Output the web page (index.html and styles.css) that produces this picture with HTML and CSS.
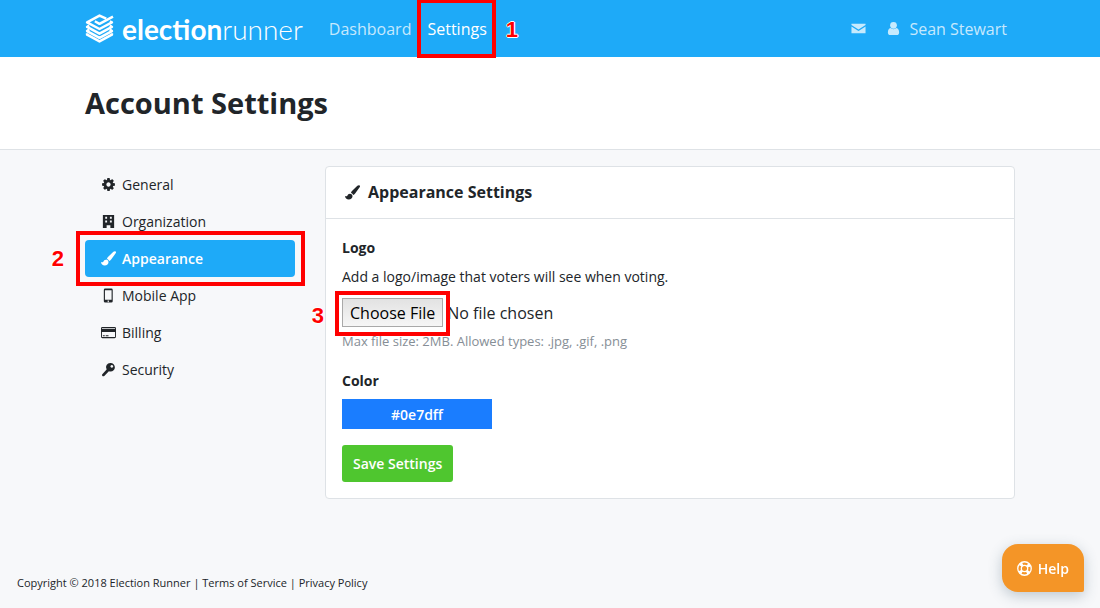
FILE: index.html
```html
<!DOCTYPE html>
<html lang="en">
<head>
  <meta charset="UTF-8" />
  <meta name="viewport" content="width=device-width, initial-scale=1.0"/>
  <title>Account Settings - Election Runner</title>
  <link rel="stylesheet" href="styles.css">
</head>
<body>
  <!-- shared icon shapes -->
  <svg class="sprite" aria-hidden="true">
    <symbol id="icon-brush" viewBox="0 0 16 16">
      <path d="M15.600.5c-.6-.6-1.600-.4-2.400.3L7.700 6.200c-.8.8-1.200 1.500-1.300 2.300 1.100.3 1.900 1.100 2.200 2.200.9-.1 1.500-.6 2.200-1.600l4.800-6.600c.6-.8.5-1.500 0-2z"/>
      <path d="M5.300 9.200c-1.500 0-2.400.9-2.700 2.100-.2.700-.6.900-2.600.5.2 2.300 1.700 3.700 4 3.700 2.400 0 4-1.500 4-3.500 0-1.600-1.200-2.800-2.700-2.800z"/>
    </symbol>
  </svg>

  <nav class="navbar">
    <div class="container navbar-inner">
      <a class="brand" href="#">
        <svg class="brand-mark" viewBox="0 0 28 28" fill="none" stroke="currentColor" stroke-width="2.400" stroke-linejoin="round">
          <path d="M20.500 4.500 14 1.500 2 8l12 6.500L26 8l-2-1"/>
          <path d="m9.500 7 4.500 2.500 13-7"/>
          <path d="M4 11 2 12.500 14 19l12-6.500-2-1.500"/>
          <path d="M4 15 2 16.500 14 23l12-6.500-2-1.500"/>
          <path d="M2 18.500v1.500l12 6.500L26 20v-1.500"/>
        </svg>
        <span class="brand-text"><b>election</b>runner</span>
      </a>
      <ul class="nav-links">
        <li><a href="#">Dashboard</a></li>
        <li class="marked mark-nav"><a class="active" href="#">Settings</a><span class="mark-number">1</span></li>
      </ul>
      <ul class="nav-links nav-user">
        <li>
          <a href="#" aria-label="Messages">
            <svg class="icon" viewBox="0 0 16 16"><path d="M.5 3h15v1.200L8 9 .5 4.200zM.5 5.800 8 10.600l7.500-4.800V13H.5z"/></svg>
          </a>
        </li>
        <li>
          <a href="#">
            <svg class="icon" viewBox="0 0 16 16"><circle cx="8" cy="4.600" r="3.600"/><path d="M4.800 7.500C3 8 2 9.700 2 12.200 2 14 3 15 4.600 15h6.800c1.600 0 2.600-1 2.600-2.800 0-2.500-1-4.200-2.800-4.700-.9.800-2 1.200-3.200 1.200s-2.300-.4-3.200-1.200z"/></svg>
            <span>Sean Stewart</span>
          </a>
        </li>
      </ul>
    </div>
  </nav>

  <header class="page-header">
    <div class="container">
      <h1>Account Settings</h1>
    </div>
  </header>

  <main class="container content">
    <ul class="side-menu">
      <li><a href="#">
        <svg class="icon" viewBox="0 0 1792 1792"><path d="M1152 896q0-106-75-181t-181-75-181 75-75 181 75 181 181 75 181-75 75-181zm512-109v222q0 12-8 23t-20 13l-185 28q-19 54-39 91 35 50 107 138 10 12 10 25t-9 23q-27 37-99 108t-94 71q-12 0-26-9l-138-108q-44 23-91 38-16 136-29 186-7 28-36 28h-222q-14 0-24-8t-12-22l-28-184q-49-16-90-37l-141 107q-10 9-25 9-14 0-25-11-126-114-165-168-7-10-7-23 0-12 8-23 15-21 51-66t54-71q-27-50-41-99l-183-27q-13-2-21-12t-8-24v-222q0-12 8-23t19-13l186-28q14-46 39-92-40-57-107-138-10-12-10-24 0-10 9-23 26-36 98-107t95-72q13 0 26 10l138 107q44-23 91-38 16-136 29-186 7-28 36-28h222q14 0 24 8t12 22l28 184q49 16 90 37l142-107q9-9 24-9 13 0 25 10 129 119 165 170 7 8 7 22 0 12-8 23-15 21-51 66t-54 71q26 50 41 98l183 28q13 2 21 12t8 24z"/></svg>
        General</a></li>
      <li><a href="#">
        <svg class="icon" viewBox="0 0 16 16"><path fill-rule="evenodd" d="M2 1h12v14h-4v-3H6v3H2zM4.500 3v2h2V3zM9.500 3v2h2V3zM4.500 7v2h2V7zM9.500 7v2h2V7z"/></svg>
        Organization</a></li>
      <li class="marked mark-side"><a class="active" href="#">
        <svg class="icon"><use href="#icon-brush"/></svg>
        Appearance</a><span class="mark-number">2</span></li>
      <li><a href="#">
        <svg class="icon" viewBox="0 0 16 16"><path fill-rule="evenodd" d="M4.500 0.500h6.500a1.500 1.500 0 0 1 1.500 1.500v12a1.500 1.500 0 0 1-1.500 1.500H4.500A1.500 1.500 0 0 1 3 14V2A1.500 1.500 0 0 1 4.500.5zM4.200 2.500v10h7.100v-10zm3.500 10.800a.8.8 0 1 0 .1 0z"/></svg>
        Mobile App</a></li>
      <li><a href="#">
        <svg class="icon" viewBox="0 0 16 16"><path fill-rule="evenodd" d="M1.500 2h13A1.500 1.500 0 0 1 16 3.500v9a1.500 1.500 0 0 1-1.500 1.500h-13A1.500 1.500 0 0 1 0 12.500v-9A1.500 1.500 0 0 1 1.500 2zM1 3.100v1h14v-1zM1 7.500v5.400h14V7.500zM2 11h2v1H2zm3 0h3v1H5z"/></svg>
        Billing</a></li>
      <li><a href="#">
        <svg class="icon" viewBox="0 0 16 16"><path fill-rule="evenodd" d="M10.200 1a4.600 4.600 0 0 1 0 9.200c-.7 0-1.200-.1-1.800-.4l-4.900 5c-.7.700-1.500.6-2 .1s-.6-1.300.1-2l4.400-4.900A4.600 4.600 0 0 1 10.200 1zm1.300 2.200a1.500 1.500 0 1 0 .1 0z"/></svg>
        Security</a></li>
    </ul>

    <section class="card">
      <h2 class="card-header">
        <svg class="icon"><use href="#icon-brush"/></svg>
        Appearance Settings
      </h2>
      <form class="card-body">
        <div class="form-group">
          <label class="form-label" for="logo">Logo</label>
          <p>Add a logo/image that voters will see when voting.</p>
          <div class="marked mark-file">
            <input type="file" id="logo" accept=".jpg,.gif,.png" />
            <span class="mark-number">3</span>
          </div>
          <small>Max file size: 2MB. Allowed types: .jpg, .gif, .png</small>
        </div>
        <div class="form-group">
          <label class="form-label" for="color">Color</label>
          <input class="color-input" type="text" id="color" value="#0e7dff" />
        </div>
        <button class="save-btn" type="button">Save Settings</button>
      </form>
    </section>
  </main>

  <footer class="footer">
    Copyright © 2018 Election Runner | <a href="#">Terms of Service</a> | <a href="#">Privacy Policy</a>
  </footer>

  <button class="help-btn" type="button">
    <svg class="icon" viewBox="0 0 16 16" fill="none" stroke="currentColor">
      <circle cx="8" cy="8" r="7.200" stroke-width="1.400"/>
      <circle cx="8" cy="8" r="3.400" stroke-width="1.400"/>
      <circle cx="8" cy="8" r="5.200" stroke-width="3.600" stroke-dasharray="3 5.168" stroke-dashoffset="-2.584"/>
    </svg>
    Help
  </button>
</body>
</html>
```
FILE: styles.css
```css
:root {
  --blue: #1eaaf8;
  --text: #212529;
  --bg: #f7f8fa;
  --border: #dee2e6;
  --mark: #ff0000;
}

*, *::after {
  box-sizing: border-box;
}

body {
  margin: 0;
  min-height: 100vh;
  display: flex;
  flex-direction: column;
  font-family: "Open Sans", sans-serif;
  font-size: 14px;
  line-height: 21px;
  color: var(--text);
  background: var(--bg);
}

a {
  color: inherit;
  text-decoration: none;
}

ul {
  list-style: none;
  margin: 0;
  padding: 0;
}

.sprite {
  position: absolute;
  width: 0;
  height: 0;
}

.icon {
  width: 15px;
  height: 15px;
  flex: none;
  fill: currentColor;
}

.container {
  width: 100%;
  max-width: 960px;
  margin: 0 auto;
  padding: 0 15px;
}

/* Navbar */
.navbar {
  background: var(--blue);
  color: #fff;
}

.navbar-inner {
  display: flex;
  align-items: center;
  height: 57px;
}

.brand {
  display: flex;
  align-items: center;
  gap: 8px;
  margin-right: 18px;
}

.brand-mark {
  width: 29px;
  height: 29px;
}

.brand-text {
  font-family: Lato, sans-serif;
  font-size: 28px;
  font-weight: 300;
  line-height: 32px;
}

.brand-text b {
  font-weight: 700;
}

.nav-links {
  display: flex;
  align-items: center;
  font-size: 16px;
  line-height: 24px;
}

.nav-links a {
  display: flex;
  align-items: center;
  gap: 8px;
  padding: 8px;
  color: rgba(255, 255, 255, 0.75);
}

.nav-links a.active {
  color: #fff;
}

.nav-user {
  margin-left: auto;
  gap: 4px;
}

/* Page header */
.page-header {
  padding: 28px 0;
  background: #fff;
  border-bottom: 1px solid var(--border);
}

h1 {
  margin: 0;
  font-size: 29px;
  line-height: 36px;
}

/* Content */
.content {
  display: grid;
  grid-template-columns: 210px 1fr;
  gap: 30px;
  align-items: start;
  padding-top: 16px;
}

.side-menu a {
  display: flex;
  align-items: center;
  gap: 6px;
  padding: 8px 16px;
  border-radius: 4px;
}

.side-menu a.active {
  background: var(--blue);
  color: #fff;
  font-weight: 600;
}

.card {
  background: #fff;
  border: 1px solid var(--border);
  border-radius: 4px;
}

.card-header {
  display: flex;
  align-items: center;
  gap: 8px;
  margin: 0;
  padding: 14px 19px;
  border-bottom: 1px solid var(--border);
  font-size: 16px;
  line-height: 23px;
}

.card-body {
  padding: 18px 16px 16px;
}

.card-body p {
  margin: 0 0 11px;
}

.form-group {
  margin-bottom: 16px;
}

.form-label {
  display: block;
  margin-bottom: 8px;
  font-weight: 700;
}

input[type="file"] {
  display: block;
  font: 16px/24px "Open Sans", sans-serif;
  color: var(--text);
}

input[type="file"]::file-selector-button {
  height: 29px;
  padding: 0 7px;
  border: 1px solid #a9a9a9;
  background: linear-gradient(#e2e2e2, #f6f6f6);
  color: #000;
  font: inherit;
}

small {
  display: block;
  margin: 4px 0 19px;
  font-size: 13px;
  line-height: 20px;
  color: #868e96;
}

.color-input {
  display: block;
  width: 150px;
  height: 30px;
  padding: 0;
  border: 0;
  background: #1a7dff;
  color: #fff;
  font: 600 14px "Open Sans", sans-serif;
  text-align: center;
}

.save-btn {
  padding: 8px 11px;
  border: 0;
  border-radius: 3px;
  background: #4fc62f;
  color: #fff;
  font: 600 14px/21px "Open Sans", sans-serif;
}

/* Footer */
.footer {
  margin-top: auto;
  padding: 16px 17px;
  font-size: 11px;
  line-height: 18px;
}

.help-btn {
  position: fixed;
  right: 16px;
  bottom: 16px;
  display: flex;
  align-items: center;
  gap: 6px;
  height: 48px;
  padding: 0 15px;
  border: 0;
  border-radius: 16px 16px 2px 16px;
  background: #f49527;
  box-shadow: 0 4px 14px rgba(60, 90, 110, 0.3);
  color: #fff;
  font: 600 14px "Open Sans", sans-serif;
}

.help-btn .icon {
  fill: none;
}

/* Numbered step markers */
.marked {
  position: relative;
}

.marked::after {
  content: "";
  position: absolute;
  border: 4px solid var(--mark);
  pointer-events: none;
}

.mark-number {
  position: absolute;
  color: var(--mark);
  font: 700 22px/24px "Liberation Sans", Arial, sans-serif;
  text-shadow: 1px 0 #fff, -1px 0 #fff, 0 1px #fff, 0 -1px #fff;
}

.mark-nav::after {
  inset: -10px -1px -9px -2px;
}

.mark-nav .mark-number {
  left: calc(100% + 11px);
  top: 9px;
}

.mark-side::after {
  inset: -9px -10px -9px -9px;
}

.mark-side .mark-number {
  right: calc(100% + 21px);
  top: 7px;
}

.mark-file::after {
  top: -7px;
  left: -7px;
  width: 115px;
  height: 45px;
}

.mark-file .mark-number {
  right: calc(100% + 18px);
  top: 6px;
}
```
